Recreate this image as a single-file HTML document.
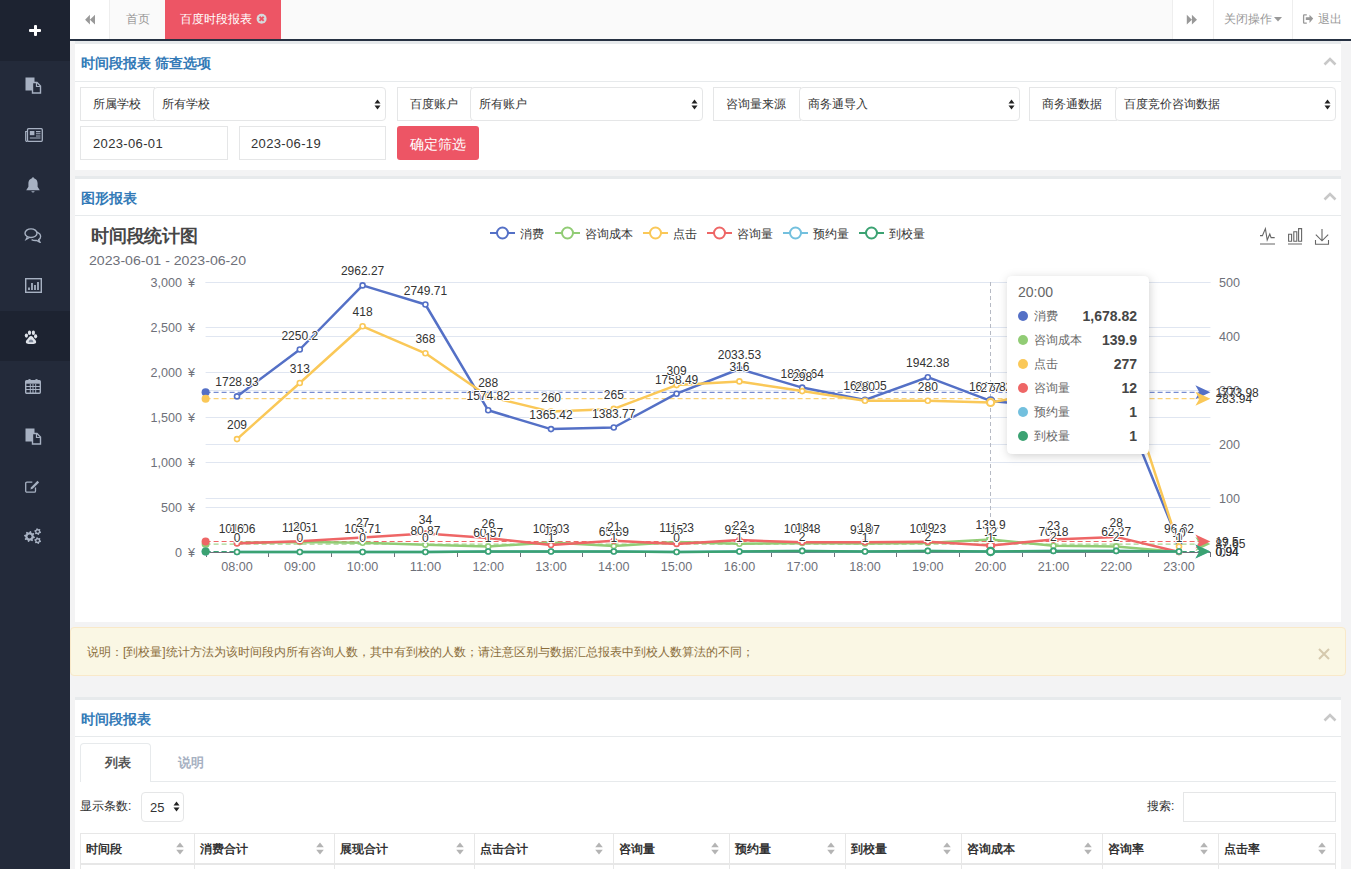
<!DOCTYPE html><html><head><meta charset="utf-8"><title>时间段报表</title><style>
*{margin:0;padding:0;box-sizing:border-box}
html,body{width:1351px;height:869px;overflow:hidden;background:#f3f3f4;font-family:"Liberation Sans",sans-serif;font-size:13px;color:#676a6c}
.a{position:absolute}
.t{position:absolute;white-space:nowrap;line-height:1}
i{display:inline-block;width:1em;text-align:center;font-style:normal}
</style></head><body>
<div class="a" style="left:0px;top:0px;width:70px;height:869px;background:#232a3a"></div>
<div class="a" style="left:0px;top:0px;width:70px;height:61px;background:#1d2331"></div>
<div class="a" style="left:0px;top:311px;width:70px;height:50px;background:#1d2331"></div>
<div class="a" style="left:29.3px;top:29px;width:11.4px;height:3px;background:#fff;border-radius:1px"></div>
<div class="a" style="left:33.5px;top:25px;width:3px;height:11px;background:#fff;border-radius:1px"></div>
<svg class="a" style="left:25px;top:77px;" width="17" height="17" viewBox="0 0 17 17"><rect x="0.5" y="0.5" width="9" height="13" fill="#a7b1c2"/><path d="M7.5 5.5h4.5l3.5 3.5v7h-8z" fill="#232a3a" stroke="#a7b1c2" stroke-width="1.4"/><path d="M11.5 5.5v4h4" fill="none" stroke="#a7b1c2" stroke-width="1.2"/></svg>
<svg class="a" style="left:25px;top:128px;" width="18" height="14" viewBox="0 0 18 14"><rect x="2.5" y="0.7" width="14.8" height="12.6" rx="1" fill="none" stroke="#a7b1c2" stroke-width="1.3"/><path d="M2.5 3.5H0.7v8.5a1.3 1.3 0 0 0 1.8 1.3" fill="none" stroke="#a7b1c2" stroke-width="1.2"/><rect x="4.8" y="3" width="4.6" height="4.2" fill="#a7b1c2"/><path d="M11 3.6h4.5M11 5.8h4.5M11 8h4.5M4.8 10h10.7" stroke="#a7b1c2" stroke-width="1.1"/></svg>
<svg class="a" style="left:25px;top:177px;" width="16" height="17" viewBox="0 0 16 17"><path d="M8 1.2c-3 0-4.6 2.4-4.6 5.2v3.4L1.2 13.2h13.6L12.6 9.8V6.4C12.6 3.6 11 1.2 8 1.2z" fill="#a7b1c2"/><circle cx="8" cy="1.2" r="1" fill="#a7b1c2"/><path d="M6.3 14.2a1.8 1.8 0 0 0 3.4 0z" fill="#a7b1c2"/></svg>
<svg class="a" style="left:24px;top:228px;" width="18" height="15" viewBox="0 0 18 15"><ellipse cx="7" cy="5.2" rx="6" ry="4.3" fill="none" stroke="#a7b1c2" stroke-width="1.4"/><path d="M3.5 8.5 2 11.5 6 9.3" fill="none" stroke="#a7b1c2" stroke-width="1.2"/><path d="M12.8 4.2c2.3.9 3.8 2.5 3.8 4.3 0 1.3-.7 2.4-1.9 3.2l1.3 2.6-3.4-1.8c-1.8.2-3.6-.1-5-.9" fill="none" stroke="#a7b1c2" stroke-width="1.4"/></svg>
<svg class="a" style="left:25px;top:278px;" width="17" height="15" viewBox="0 0 17 15"><rect x="0.7" y="0.7" width="15.6" height="13.6" fill="none" stroke="#a7b1c2" stroke-width="1.4"/><path d="M4 12V9.5M7 12V5M10 12V7M13 12V4" stroke="#a7b1c2" stroke-width="1.8"/></svg>
<svg class="a" style="left:24px;top:329px;" width="14" height="16" viewBox="0 0 14 16"><ellipse cx="2.4" cy="6.6" rx="1.6" ry="2.1" fill="#dfe3ea"/><ellipse cx="5.5" cy="3.7" rx="1.6" ry="2.2" fill="#dfe3ea"/><ellipse cx="9.4" cy="3.7" rx="1.6" ry="2.2" fill="#dfe3ea"/><ellipse cx="11.6" cy="7.3" rx="1.6" ry="2.1" fill="#dfe3ea"/><path d="M7 7C5.6 7 4.4 8.9 3.4 10.2 2.2 11.4 1.6 12.3 1.9 13.6 2.3 14.7 3.4 14.9 4.6 14.9h4.8c1.2 0 2.3-.2 2.7-1.3.3-1.3-.3-2.2-1.5-3.4C9.6 8.9 8.4 7 7 7z" fill="#dfe3ea"/><path d="M4.6 13.2c.2-1.4.9-2.8 2.4-2.8s2.2 1.4 2.4 2.8z" fill="#7d879a"/></svg>
<svg class="a" style="left:25px;top:378px;" width="16" height="16" viewBox="0 0 16 16"><rect x="0.7" y="2.7" width="14.6" height="12.6" rx="1" fill="none" stroke="#a7b1c2" stroke-width="1.4"/><rect x="0.7" y="2.7" width="14.6" height="3" fill="#a7b1c2"/><circle cx="4.5" cy="2.5" r="1.6" fill="#a7b1c2"/><circle cx="11.5" cy="2.5" r="1.6" fill="#a7b1c2"/><path d="M1 8.5h14M1 11.5h14M5.3 6v9M8 6v9M10.7 6v9" stroke="#a7b1c2" stroke-width="1"/></svg>
<svg class="a" style="left:25px;top:428px;" width="17" height="17" viewBox="0 0 17 17"><rect x="0.5" y="0.5" width="9" height="13" fill="#a7b1c2"/><path d="M7.5 5.5h4.5l3.5 3.5v7h-8z" fill="#232a3a" stroke="#a7b1c2" stroke-width="1.4"/><path d="M11.5 5.5v4h4" fill="none" stroke="#a7b1c2" stroke-width="1.2"/></svg>
<svg class="a" style="left:25px;top:480px;" width="15" height="13" viewBox="0 0 15 13"><path d="M10.5 7.5v3.5a1.2 1.2 0 0 1-1.2 1.2H1.9A1.2 1.2 0 0 1 .7 11V3.4a1.2 1.2 0 0 1 1.2-1.2h5.4" fill="none" stroke="#a7b1c2" stroke-width="1.3"/><path d="M12.5 .8l1.6 1.6-6.4 6.4-2.3.7.7-2.3z" fill="#a7b1c2"/></svg>
<svg class="a" style="left:24px;top:528px;" width="18" height="16" viewBox="0 0 18 16"><polygon points="10.97,9.04 10.76,10.10 9.14,10.44 8.69,11.12 8.99,12.75 8.09,13.35 6.70,12.45 5.90,12.61 4.96,13.97 3.90,13.76 3.56,12.14 2.88,11.69 1.25,11.99 0.65,11.09 1.55,9.70 1.39,8.90 0.03,7.96 0.24,6.90 1.86,6.56 2.31,5.88 2.01,4.25 2.91,3.65 4.30,4.55 5.10,4.39 6.04,3.03 7.10,3.24 7.44,4.86 8.12,5.31 9.75,5.01 10.35,5.91 9.45,7.30 9.61,8.10" fill="#a7b1c2"/><circle cx="5.5" cy="8.5" r="2.0" fill="#232a3a"/><polygon points="17.07,4.04 16.84,4.90 15.72,5.15 15.25,5.62 15.00,6.74 14.14,6.97 13.37,6.13 12.72,5.96 11.63,6.30 11.00,5.67 11.34,4.58 11.17,3.93 10.33,3.16 10.56,2.30 11.68,2.05 12.15,1.58 12.40,0.46 13.26,0.23 14.03,1.07 14.68,1.24 15.77,0.90 16.40,1.53 16.06,2.62 16.23,3.27" fill="#a7b1c2"/><circle cx="13.7" cy="3.6" r="1.2" fill="#232a3a"/><polygon points="17.07,13.04 16.84,13.90 15.72,14.15 15.25,14.62 15.00,15.74 14.14,15.97 13.37,15.13 12.72,14.96 11.63,15.30 11.00,14.67 11.34,13.58 11.17,12.93 10.33,12.16 10.56,11.30 11.68,11.05 12.15,10.58 12.40,9.46 13.26,9.23 14.03,10.07 14.68,10.24 15.77,9.90 16.40,10.53 16.06,11.62 16.23,12.27" fill="#a7b1c2"/><circle cx="13.7" cy="12.6" r="1.2" fill="#232a3a"/></svg>
<div class="a" style="left:70px;top:0px;width:1281px;height:39px;background:#fafafa"></div>
<div class="a" style="left:70px;top:39px;width:1281px;height:2px;background:#263142"></div>
<div class="a" style="left:70px;top:0px;width:40px;height:39px;background:#fff;border-right:1px solid #eee"></div>
<svg class="a" style="left:84px;top:14px;" width="12" height="11" viewBox="0 0 12 11"><path d="M5.9 0.8v9.7L1.1 5.65z M11 0.8v9.7L5.9 5.65z" fill="#999"/></svg>
<div class="t" style="left:110px;width:55px;text-align:center;top:12.6px;font-size:12px;color:#999;font-weight:normal;"><i>首</i><i>页</i></div>
<div class="a" style="left:165px;top:0px;width:116px;height:39px;background:#ed5565"></div>
<div class="t" style="left:180px;top:12.6px;font-size:12px;color:#fff;font-weight:normal;"><i>百</i><i>度</i><i>时</i><i>段</i><i>报</i><i>表</i></div>
<svg class="a" style="left:256px;top:13px;" width="12" height="12" viewBox="0 0 12 12"><circle cx="5.6" cy="5.8" r="5" fill="#d5dadc"/><path d="M3.5 3.7l4.2 4.2M7.7 3.7l-4.2 4.2" stroke="#ed5565" stroke-width="2"/></svg>
<div class="a" style="left:1172px;top:0px;width:41px;height:39px;background:#fff;border-left:1px solid #eee"></div>
<svg class="a" style="left:1186px;top:14px;" width="12" height="11" viewBox="0 0 12 11"><path d="M0.8 0.8v9.7L5.9 5.65z M5.9 0.8v9.7L11 5.65z" fill="#999"/></svg>
<div class="a" style="left:1213px;top:0px;width:79px;height:39px;background:#fff;border-left:1px solid #eee"></div>
<div class="t" style="left:1224px;top:12.6px;font-size:12px;color:#999;font-weight:normal;"><i>关</i><i>闭</i><i>操</i><i>作</i></div>
<svg class="a" style="left:1274px;top:17px;" width="8" height="5" viewBox="0 0 8 5"><path d="M0 0h8L4 4.5z" fill="#999"/></svg>
<div class="a" style="left:1292px;top:0px;width:59px;height:39px;background:#fff;border-left:1px solid #eee"></div>
<svg class="a" style="left:1302px;top:13px;" width="13" height="12" viewBox="0 0 13 12"><path d="M4.8 1.8H2.2Q1.6 1.8 1.6 2.4v7.2q0 .6.6.6h2.6" fill="none" stroke="#999" stroke-width="1.3"/><path d="M3.8 4.3h3.7V1.8L11.2 5.6 7.5 9.9V7.1H3.8z" fill="#999"/></svg>
<div class="t" style="left:1318px;top:12.6px;font-size:12px;color:#999;font-weight:normal;"><i>退</i><i>出</i></div>
<div class="a" style="left:75px;top:41px;width:1266px;height:129px;background:#fff;border-top:3px solid #e7eaec"></div>
<div class="a" style="left:75px;top:81px;width:1266px;height:1px;background:#e7eaec"></div>
<div class="t" style="left:81px;top:56.0px;font-size:14px;color:#337ab7;font-weight:bold;"><i>时</i><i>间</i><i>段</i><i>报</i><i>表</i> <i>筛</i><i>查</i><i>选</i><i>项</i></div>
<svg class="a" style="left:1323px;top:57.0px;" width="14" height="9" viewBox="0 0 14 9"><path d="M1.5 7.5 7 2l5.5 5.5" fill="none" stroke="#c8c8c8" stroke-width="2.6"/></svg>
<div class="a" style="left:75px;top:176px;width:1266px;height:446px;background:#fff;border-top:3px solid #e7eaec"></div>
<div class="a" style="left:75px;top:215px;width:1266px;height:1px;background:#e7eaec"></div>
<div class="t" style="left:81px;top:190.5px;font-size:14px;color:#337ab7;font-weight:bold;"><i>图</i><i>形</i><i>报</i><i>表</i></div>
<svg class="a" style="left:1323px;top:191.5px;" width="14" height="9" viewBox="0 0 14 9"><path d="M1.5 7.5 7 2l5.5 5.5" fill="none" stroke="#c8c8c8" stroke-width="2.6"/></svg>
<div class="a" style="left:80px;top:87px;width:75px;height:34px;background:#fff;border:1px solid #e5e6e7"></div>
<div class="t" style="left:80px;width:73px;text-align:center;top:98.0px;font-size:12px;color:#333;font-weight:normal;"><i>所</i><i>属</i><i>学</i><i>校</i></div>
<div class="a" style="left:153px;top:87px;width:233px;height:34px;background:#fff;border:1px solid #e5e6e7;border-radius:4px"></div>
<div class="t" style="left:162px;top:98.0px;font-size:12px;color:#333;font-weight:normal;"><i>所</i><i>有</i><i>学</i><i>校</i></div>
<svg class="a" style="left:374px;top:99px;" width="7" height="11" viewBox="0 0 7 11"><path d="M3.5 0.5 6.5 4.5h-6zM3.5 10.5 6.5 6.5h-6z" fill="#222"/></svg>
<div class="a" style="left:397px;top:87px;width:75px;height:34px;background:#fff;border:1px solid #e5e6e7"></div>
<div class="t" style="left:397px;width:73px;text-align:center;top:98.0px;font-size:12px;color:#333;font-weight:normal;"><i>百</i><i>度</i><i>账</i><i>户</i></div>
<div class="a" style="left:470px;top:87px;width:233px;height:34px;background:#fff;border:1px solid #e5e6e7;border-radius:4px"></div>
<div class="t" style="left:479px;top:98.0px;font-size:12px;color:#333;font-weight:normal;"><i>所</i><i>有</i><i>账</i><i>户</i></div>
<svg class="a" style="left:691px;top:99px;" width="7" height="11" viewBox="0 0 7 11"><path d="M3.5 0.5 6.5 4.5h-6zM3.5 10.5 6.5 6.5h-6z" fill="#222"/></svg>
<div class="a" style="left:713px;top:87px;width:88px;height:34px;background:#fff;border:1px solid #e5e6e7"></div>
<div class="t" style="left:713px;width:86px;text-align:center;top:98.0px;font-size:12px;color:#333;font-weight:normal;"><i>咨</i><i>询</i><i>量</i><i>来</i><i>源</i></div>
<div class="a" style="left:799px;top:87px;width:221px;height:34px;background:#fff;border:1px solid #e5e6e7;border-radius:4px"></div>
<div class="t" style="left:808px;top:98.0px;font-size:12px;color:#333;font-weight:normal;"><i>商</i><i>务</i><i>通</i><i>导</i><i>入</i></div>
<svg class="a" style="left:1008px;top:99px;" width="7" height="11" viewBox="0 0 7 11"><path d="M3.5 0.5 6.5 4.5h-6zM3.5 10.5 6.5 6.5h-6z" fill="#222"/></svg>
<div class="a" style="left:1029px;top:87px;width:88px;height:34px;background:#fff;border:1px solid #e5e6e7"></div>
<div class="t" style="left:1029px;width:86px;text-align:center;top:98.0px;font-size:12px;color:#333;font-weight:normal;"><i>商</i><i>务</i><i>通</i><i>数</i><i>据</i></div>
<div class="a" style="left:1115px;top:87px;width:221px;height:34px;background:#fff;border:1px solid #e5e6e7;border-radius:4px"></div>
<div class="t" style="left:1124px;top:98.0px;font-size:12px;color:#333;font-weight:normal;"><i>百</i><i>度</i><i>竞</i><i>价</i><i>咨</i><i>询</i><i>数</i><i>据</i></div>
<svg class="a" style="left:1324px;top:99px;" width="7" height="11" viewBox="0 0 7 11"><path d="M3.5 0.5 6.5 4.5h-6zM3.5 10.5 6.5 6.5h-6z" fill="#222"/></svg>
<div class="a" style="left:80px;top:126px;width:147.5px;height:34px;background:#fff;border:1px solid #e5e6e7"></div>
<div class="t" style="left:93px;top:137.0px;font-size:13px;color:#333;font-weight:normal;letter-spacing:0.35px">2023-06-01</div>
<div class="a" style="left:239px;top:126px;width:147px;height:34px;background:#fff;border:1px solid #e5e6e7"></div>
<div class="t" style="left:251px;top:137.0px;font-size:13px;color:#333;font-weight:normal;letter-spacing:0.35px">2023-06-19</div>
<div class="a" style="left:397px;top:126px;width:82px;height:34px;background:#ed5565;border-radius:3px"></div>
<div class="t" style="left:397px;width:82px;text-align:center;top:136.5px;font-size:14px;color:#fff;font-weight:normal;"><i>确</i><i>定</i><i>筛</i><i>选</i></div>
<svg class="a" style="left:0;top:0" width="1351" height="869" viewBox="0 0 1351 869" font-family="Liberation Sans, sans-serif">
<text x="91" y="241.8" font-size="18" font-weight="bold" fill="#464646" textLength="107" lengthAdjust="spacing">时间段统计图</text>
<text x="89" y="265" font-size="12" fill="#6e7079" textLength="157" lengthAdjust="spacingAndGlyphs">2023-06-01 - 2023-06-20</text>
<line x1="205.6" y1="507.5" x2="1210.4" y2="507.5" stroke="#e0e6f1" stroke-width="1"/>
<line x1="205.6" y1="462.5" x2="1210.4" y2="462.5" stroke="#e0e6f1" stroke-width="1"/>
<line x1="205.6" y1="417.5" x2="1210.4" y2="417.5" stroke="#e0e6f1" stroke-width="1"/>
<line x1="205.6" y1="372.5" x2="1210.4" y2="372.5" stroke="#e0e6f1" stroke-width="1"/>
<line x1="205.6" y1="327.5" x2="1210.4" y2="327.5" stroke="#e0e6f1" stroke-width="1"/>
<line x1="205.6" y1="282.5" x2="1210.4" y2="282.5" stroke="#e0e6f1" stroke-width="1"/>
<line x1="205.6" y1="498.5" x2="1210.4" y2="498.5" stroke="#e0e6f1" stroke-width="1"/>
<line x1="205.6" y1="444.5" x2="1210.4" y2="444.5" stroke="#e0e6f1" stroke-width="1"/>
<line x1="205.6" y1="390.5" x2="1210.4" y2="390.5" stroke="#e0e6f1" stroke-width="1"/>
<line x1="205.6" y1="336.5" x2="1210.4" y2="336.5" stroke="#e0e6f1" stroke-width="1"/>
<line x1="205.6" y1="282.5" x2="1210.4" y2="282.5" stroke="#e0e6f1" stroke-width="1"/>
<text x="182" y="557.2" font-size="12" fill="#6e7079" text-anchor="end" textLength="7.0" lengthAdjust="spacingAndGlyphs">0</text>
<text x="188" y="557.2" font-size="12" fill="#6e7079" textLength="7" lengthAdjust="spacingAndGlyphs">¥</text>
<text x="182" y="512.2" font-size="12" fill="#6e7079" text-anchor="end" textLength="21.0" lengthAdjust="spacingAndGlyphs">500</text>
<text x="188" y="512.2" font-size="12" fill="#6e7079" textLength="7" lengthAdjust="spacingAndGlyphs">¥</text>
<text x="182" y="467.2" font-size="12" fill="#6e7079" text-anchor="end" textLength="31.5" lengthAdjust="spacingAndGlyphs">1,000</text>
<text x="188" y="467.2" font-size="12" fill="#6e7079" textLength="7" lengthAdjust="spacingAndGlyphs">¥</text>
<text x="182" y="422.2" font-size="12" fill="#6e7079" text-anchor="end" textLength="31.5" lengthAdjust="spacingAndGlyphs">1,500</text>
<text x="188" y="422.2" font-size="12" fill="#6e7079" textLength="7" lengthAdjust="spacingAndGlyphs">¥</text>
<text x="182" y="377.2" font-size="12" fill="#6e7079" text-anchor="end" textLength="31.5" lengthAdjust="spacingAndGlyphs">2,000</text>
<text x="188" y="377.2" font-size="12" fill="#6e7079" textLength="7" lengthAdjust="spacingAndGlyphs">¥</text>
<text x="182" y="332.2" font-size="12" fill="#6e7079" text-anchor="end" textLength="31.5" lengthAdjust="spacingAndGlyphs">2,500</text>
<text x="188" y="332.2" font-size="12" fill="#6e7079" textLength="7" lengthAdjust="spacingAndGlyphs">¥</text>
<text x="182" y="287.2" font-size="12" fill="#6e7079" text-anchor="end" textLength="31.5" lengthAdjust="spacingAndGlyphs">3,000</text>
<text x="188" y="287.2" font-size="12" fill="#6e7079" textLength="7" lengthAdjust="spacingAndGlyphs">¥</text>
<text x="1219" y="557.2" font-size="12" fill="#6e7079" textLength="7.0" lengthAdjust="spacingAndGlyphs">0</text>
<text x="1219" y="503.2" font-size="12" fill="#6e7079" textLength="21.0" lengthAdjust="spacingAndGlyphs">100</text>
<text x="1219" y="449.2" font-size="12" fill="#6e7079" textLength="21.0" lengthAdjust="spacingAndGlyphs">200</text>
<text x="1219" y="395.2" font-size="12" fill="#6e7079" textLength="21.0" lengthAdjust="spacingAndGlyphs">300</text>
<text x="1219" y="341.2" font-size="12" fill="#6e7079" textLength="21.0" lengthAdjust="spacingAndGlyphs">400</text>
<text x="1219" y="287.2" font-size="12" fill="#6e7079" textLength="21.0" lengthAdjust="spacingAndGlyphs">500</text>
<line x1="205.6" y1="552.5" x2="1210.4" y2="552.5" stroke="#6e7079" stroke-width="1"/>
<line x1="206.5" y1="552" x2="206.5" y2="557" stroke="#6e7079" stroke-width="1"/>
<line x1="268.5" y1="552" x2="268.5" y2="557" stroke="#6e7079" stroke-width="1"/>
<line x1="331.5" y1="552" x2="331.5" y2="557" stroke="#6e7079" stroke-width="1"/>
<line x1="394.5" y1="552" x2="394.5" y2="557" stroke="#6e7079" stroke-width="1"/>
<line x1="457.5" y1="552" x2="457.5" y2="557" stroke="#6e7079" stroke-width="1"/>
<line x1="520.5" y1="552" x2="520.5" y2="557" stroke="#6e7079" stroke-width="1"/>
<line x1="582.5" y1="552" x2="582.5" y2="557" stroke="#6e7079" stroke-width="1"/>
<line x1="645.5" y1="552" x2="645.5" y2="557" stroke="#6e7079" stroke-width="1"/>
<line x1="708.5" y1="552" x2="708.5" y2="557" stroke="#6e7079" stroke-width="1"/>
<line x1="771.5" y1="552" x2="771.5" y2="557" stroke="#6e7079" stroke-width="1"/>
<line x1="834.5" y1="552" x2="834.5" y2="557" stroke="#6e7079" stroke-width="1"/>
<line x1="896.5" y1="552" x2="896.5" y2="557" stroke="#6e7079" stroke-width="1"/>
<line x1="959.5" y1="552" x2="959.5" y2="557" stroke="#6e7079" stroke-width="1"/>
<line x1="1022.5" y1="552" x2="1022.5" y2="557" stroke="#6e7079" stroke-width="1"/>
<line x1="1085.5" y1="552" x2="1085.5" y2="557" stroke="#6e7079" stroke-width="1"/>
<line x1="1148.5" y1="552" x2="1148.5" y2="557" stroke="#6e7079" stroke-width="1"/>
<line x1="1210.5" y1="552" x2="1210.5" y2="557" stroke="#6e7079" stroke-width="1"/>
<text x="237.0" y="570.5" font-size="12" fill="#6e7079" text-anchor="middle" textLength="31.5" lengthAdjust="spacingAndGlyphs">08:00</text>
<text x="299.8" y="570.5" font-size="12" fill="#6e7079" text-anchor="middle" textLength="31.5" lengthAdjust="spacingAndGlyphs">09:00</text>
<text x="362.6" y="570.5" font-size="12" fill="#6e7079" text-anchor="middle" textLength="31.5" lengthAdjust="spacingAndGlyphs">10:00</text>
<text x="425.4" y="570.5" font-size="12" fill="#6e7079" text-anchor="middle" textLength="31.5" lengthAdjust="spacingAndGlyphs">11:00</text>
<text x="488.2" y="570.5" font-size="12" fill="#6e7079" text-anchor="middle" textLength="31.5" lengthAdjust="spacingAndGlyphs">12:00</text>
<text x="551.0" y="570.5" font-size="12" fill="#6e7079" text-anchor="middle" textLength="31.5" lengthAdjust="spacingAndGlyphs">13:00</text>
<text x="613.8" y="570.5" font-size="12" fill="#6e7079" text-anchor="middle" textLength="31.5" lengthAdjust="spacingAndGlyphs">14:00</text>
<text x="676.6" y="570.5" font-size="12" fill="#6e7079" text-anchor="middle" textLength="31.5" lengthAdjust="spacingAndGlyphs">15:00</text>
<text x="739.4" y="570.5" font-size="12" fill="#6e7079" text-anchor="middle" textLength="31.5" lengthAdjust="spacingAndGlyphs">16:00</text>
<text x="802.2" y="570.5" font-size="12" fill="#6e7079" text-anchor="middle" textLength="31.5" lengthAdjust="spacingAndGlyphs">17:00</text>
<text x="865.0" y="570.5" font-size="12" fill="#6e7079" text-anchor="middle" textLength="31.5" lengthAdjust="spacingAndGlyphs">18:00</text>
<text x="927.8" y="570.5" font-size="12" fill="#6e7079" text-anchor="middle" textLength="31.5" lengthAdjust="spacingAndGlyphs">19:00</text>
<text x="990.6" y="570.5" font-size="12" fill="#6e7079" text-anchor="middle" textLength="31.5" lengthAdjust="spacingAndGlyphs">20:00</text>
<text x="1053.4" y="570.5" font-size="12" fill="#6e7079" text-anchor="middle" textLength="31.5" lengthAdjust="spacingAndGlyphs">21:00</text>
<text x="1116.2" y="570.5" font-size="12" fill="#6e7079" text-anchor="middle" textLength="31.5" lengthAdjust="spacingAndGlyphs">22:00</text>
<text x="1179.0" y="570.5" font-size="12" fill="#6e7079" text-anchor="middle" textLength="31.5" lengthAdjust="spacingAndGlyphs">23:00</text>
<line x1="990.5" y1="282" x2="990.5" y2="552" stroke="#b6bac4" stroke-width="1" stroke-dasharray="4 3"/>
<line x1="205.6" y1="392.3" x2="1202.4" y2="392.3" stroke="#5470c6" stroke-width="1" stroke-dasharray="5 3"/>
<circle cx="205.6" cy="392.3" r="4" fill="#5470c6"/>
<path d="M1210.4 392.3 L1195.4 385.3 L1199.4 392.3 L1195.4 399.3 Z" fill="#5470c6"/>
<text x="1215.4" y="396.6" font-size="12" fill="#333">1773.98</text>
<line x1="205.6" y1="544.1" x2="1202.4" y2="544.1" stroke="#91cc75" stroke-width="1" stroke-dasharray="5 3"/>
<circle cx="205.6" cy="544.1" r="4" fill="#91cc75"/>
<path d="M1210.4 544.1 L1195.4 537.1 L1199.4 544.1 L1195.4 551.1 Z" fill="#91cc75"/>
<text x="1215.4" y="548.4" font-size="12" fill="#333">87.65</text>
<line x1="205.6" y1="398.7" x2="1202.4" y2="398.7" stroke="#fac858" stroke-width="1" stroke-dasharray="5 3"/>
<circle cx="205.6" cy="398.7" r="4" fill="#fac858"/>
<path d="M1210.4 398.7 L1195.4 391.7 L1199.4 398.7 L1195.4 405.7 Z" fill="#fac858"/>
<text x="1215.4" y="403.0" font-size="12" fill="#333">283.94</text>
<line x1="205.6" y1="541.5" x2="1202.4" y2="541.5" stroke="#ee6666" stroke-width="1" stroke-dasharray="5 3"/>
<circle cx="205.6" cy="541.5" r="4" fill="#ee6666"/>
<path d="M1210.4 541.5 L1195.4 534.5 L1199.4 541.5 L1195.4 548.5 Z" fill="#ee6666"/>
<text x="1215.4" y="545.8" font-size="12" fill="#333">19.5</text>
<line x1="205.6" y1="551.5" x2="1202.4" y2="551.5" stroke="#73c0de" stroke-width="1" stroke-dasharray="5 3"/>
<circle cx="205.6" cy="551.5" r="4" fill="#73c0de"/>
<path d="M1210.4 551.5 L1195.4 544.5 L1199.4 551.5 L1195.4 558.5 Z" fill="#73c0de"/>
<text x="1215.4" y="555.8" font-size="12" fill="#333">0.94</text>
<line x1="205.6" y1="551.5" x2="1202.4" y2="551.5" stroke="#3ba272" stroke-width="1" stroke-dasharray="5 3"/>
<circle cx="205.6" cy="551.5" r="4" fill="#3ba272"/>
<path d="M1210.4 551.5 L1195.4 544.5 L1199.4 551.5 L1195.4 558.5 Z" fill="#3ba272"/>
<text x="1215.4" y="555.8" font-size="12" fill="#333">0.94</text>
<polyline points="237.0,396.4 299.8,349.5 362.6,285.4 425.4,304.5 488.2,410.3 551.0,429.1 613.8,427.5 676.6,393.7 739.4,369.0 802.2,387.6 865.0,399.9 927.8,377.2 990.6,400.9 1053.4,406.6 1116.2,388.5 1179.0,543.3" fill="none" stroke="#5470c6" stroke-width="2.5" stroke-linejoin="round"/>
<circle cx="237.0" cy="396.4" r="2.5" fill="#fff" stroke="#5470c6" stroke-width="1.6"/>
<circle cx="299.8" cy="349.5" r="2.5" fill="#fff" stroke="#5470c6" stroke-width="1.6"/>
<circle cx="362.6" cy="285.4" r="2.5" fill="#fff" stroke="#5470c6" stroke-width="1.6"/>
<circle cx="425.4" cy="304.5" r="2.5" fill="#fff" stroke="#5470c6" stroke-width="1.6"/>
<circle cx="488.2" cy="410.3" r="2.5" fill="#fff" stroke="#5470c6" stroke-width="1.6"/>
<circle cx="551.0" cy="429.1" r="2.5" fill="#fff" stroke="#5470c6" stroke-width="1.6"/>
<circle cx="613.8" cy="427.5" r="2.5" fill="#fff" stroke="#5470c6" stroke-width="1.6"/>
<circle cx="676.6" cy="393.7" r="2.5" fill="#fff" stroke="#5470c6" stroke-width="1.6"/>
<circle cx="739.4" cy="369.0" r="2.5" fill="#fff" stroke="#5470c6" stroke-width="1.6"/>
<circle cx="802.2" cy="387.6" r="2.5" fill="#fff" stroke="#5470c6" stroke-width="1.6"/>
<circle cx="865.0" cy="399.9" r="2.5" fill="#fff" stroke="#5470c6" stroke-width="1.6"/>
<circle cx="927.8" cy="377.2" r="2.5" fill="#fff" stroke="#5470c6" stroke-width="1.6"/>
<circle cx="990.6" cy="400.9" r="3.6" fill="#fff" stroke="#5470c6" stroke-width="2.2"/>
<circle cx="1053.4" cy="406.6" r="2.5" fill="#fff" stroke="#5470c6" stroke-width="1.6"/>
<circle cx="1116.2" cy="388.5" r="2.5" fill="#fff" stroke="#5470c6" stroke-width="1.6"/>
<circle cx="1179.0" cy="543.3" r="2.5" fill="#fff" stroke="#5470c6" stroke-width="1.6"/>
<polyline points="237.0,542.9 299.8,541.9 362.6,542.7 425.4,544.7 488.2,546.5 551.0,542.5 613.8,546.1 676.6,542.0 739.4,543.7 802.2,542.9 865.0,543.5 927.8,542.9 990.6,539.4 1053.4,545.7 1116.2,546.4 1179.0,552.0" fill="none" stroke="#91cc75" stroke-width="2.5" stroke-linejoin="round"/>
<circle cx="237.0" cy="542.9" r="2.5" fill="#fff" stroke="#91cc75" stroke-width="1.6"/>
<circle cx="299.8" cy="541.9" r="2.5" fill="#fff" stroke="#91cc75" stroke-width="1.6"/>
<circle cx="362.6" cy="542.7" r="2.5" fill="#fff" stroke="#91cc75" stroke-width="1.6"/>
<circle cx="425.4" cy="544.7" r="2.5" fill="#fff" stroke="#91cc75" stroke-width="1.6"/>
<circle cx="488.2" cy="546.5" r="2.5" fill="#fff" stroke="#91cc75" stroke-width="1.6"/>
<circle cx="551.0" cy="542.5" r="2.5" fill="#fff" stroke="#91cc75" stroke-width="1.6"/>
<circle cx="613.8" cy="546.1" r="2.5" fill="#fff" stroke="#91cc75" stroke-width="1.6"/>
<circle cx="676.6" cy="542.0" r="2.5" fill="#fff" stroke="#91cc75" stroke-width="1.6"/>
<circle cx="739.4" cy="543.7" r="2.5" fill="#fff" stroke="#91cc75" stroke-width="1.6"/>
<circle cx="802.2" cy="542.9" r="2.5" fill="#fff" stroke="#91cc75" stroke-width="1.6"/>
<circle cx="865.0" cy="543.5" r="2.5" fill="#fff" stroke="#91cc75" stroke-width="1.6"/>
<circle cx="927.8" cy="542.9" r="2.5" fill="#fff" stroke="#91cc75" stroke-width="1.6"/>
<circle cx="990.6" cy="539.4" r="3.6" fill="#fff" stroke="#91cc75" stroke-width="2.2"/>
<circle cx="1053.4" cy="545.7" r="2.5" fill="#fff" stroke="#91cc75" stroke-width="1.6"/>
<circle cx="1116.2" cy="546.4" r="2.5" fill="#fff" stroke="#91cc75" stroke-width="1.6"/>
<circle cx="1179.0" cy="552.0" r="2.5" fill="#fff" stroke="#91cc75" stroke-width="1.6"/>
<polyline points="237.0,439.1 299.8,383.0 362.6,326.3 425.4,353.3 488.2,396.5 551.0,411.6 613.8,408.9 676.6,385.1 739.4,381.4 802.2,391.1 865.0,400.8 927.8,400.8 990.6,402.4 1053.4,391.1 1116.2,354.4 1179.0,546.6" fill="none" stroke="#fac858" stroke-width="2.5" stroke-linejoin="round"/>
<circle cx="237.0" cy="439.1" r="2.5" fill="#fff" stroke="#fac858" stroke-width="1.6"/>
<circle cx="299.8" cy="383.0" r="2.5" fill="#fff" stroke="#fac858" stroke-width="1.6"/>
<circle cx="362.6" cy="326.3" r="2.5" fill="#fff" stroke="#fac858" stroke-width="1.6"/>
<circle cx="425.4" cy="353.3" r="2.5" fill="#fff" stroke="#fac858" stroke-width="1.6"/>
<circle cx="488.2" cy="396.5" r="2.5" fill="#fff" stroke="#fac858" stroke-width="1.6"/>
<circle cx="551.0" cy="411.6" r="2.5" fill="#fff" stroke="#fac858" stroke-width="1.6"/>
<circle cx="613.8" cy="408.9" r="2.5" fill="#fff" stroke="#fac858" stroke-width="1.6"/>
<circle cx="676.6" cy="385.1" r="2.5" fill="#fff" stroke="#fac858" stroke-width="1.6"/>
<circle cx="739.4" cy="381.4" r="2.5" fill="#fff" stroke="#fac858" stroke-width="1.6"/>
<circle cx="802.2" cy="391.1" r="2.5" fill="#fff" stroke="#fac858" stroke-width="1.6"/>
<circle cx="865.0" cy="400.8" r="2.5" fill="#fff" stroke="#fac858" stroke-width="1.6"/>
<circle cx="927.8" cy="400.8" r="2.5" fill="#fff" stroke="#fac858" stroke-width="1.6"/>
<circle cx="990.6" cy="402.4" r="3.6" fill="#fff" stroke="#fac858" stroke-width="2.2"/>
<circle cx="1053.4" cy="391.1" r="2.5" fill="#fff" stroke="#fac858" stroke-width="1.6"/>
<circle cx="1116.2" cy="354.4" r="2.5" fill="#fff" stroke="#fac858" stroke-width="1.6"/>
<circle cx="1179.0" cy="546.6" r="2.5" fill="#fff" stroke="#fac858" stroke-width="1.6"/>
<polyline points="237.0,543.4 299.8,541.2 362.6,537.4 425.4,533.6 488.2,538.0 551.0,545.0 613.8,540.7 676.6,543.9 739.4,540.1 802.2,542.3 865.0,542.3 927.8,541.7 990.6,545.5 1053.4,539.6 1116.2,536.9 1179.0,552.0" fill="none" stroke="#ee6666" stroke-width="2.5" stroke-linejoin="round"/>
<circle cx="237.0" cy="543.4" r="2.5" fill="#fff" stroke="#ee6666" stroke-width="1.6"/>
<circle cx="299.8" cy="541.2" r="2.5" fill="#fff" stroke="#ee6666" stroke-width="1.6"/>
<circle cx="362.6" cy="537.4" r="2.5" fill="#fff" stroke="#ee6666" stroke-width="1.6"/>
<circle cx="425.4" cy="533.6" r="2.5" fill="#fff" stroke="#ee6666" stroke-width="1.6"/>
<circle cx="488.2" cy="538.0" r="2.5" fill="#fff" stroke="#ee6666" stroke-width="1.6"/>
<circle cx="551.0" cy="545.0" r="2.5" fill="#fff" stroke="#ee6666" stroke-width="1.6"/>
<circle cx="613.8" cy="540.7" r="2.5" fill="#fff" stroke="#ee6666" stroke-width="1.6"/>
<circle cx="676.6" cy="543.9" r="2.5" fill="#fff" stroke="#ee6666" stroke-width="1.6"/>
<circle cx="739.4" cy="540.1" r="2.5" fill="#fff" stroke="#ee6666" stroke-width="1.6"/>
<circle cx="802.2" cy="542.3" r="2.5" fill="#fff" stroke="#ee6666" stroke-width="1.6"/>
<circle cx="865.0" cy="542.3" r="2.5" fill="#fff" stroke="#ee6666" stroke-width="1.6"/>
<circle cx="927.8" cy="541.7" r="2.5" fill="#fff" stroke="#ee6666" stroke-width="1.6"/>
<circle cx="990.6" cy="545.5" r="3.6" fill="#fff" stroke="#ee6666" stroke-width="2.2"/>
<circle cx="1053.4" cy="539.6" r="2.5" fill="#fff" stroke="#ee6666" stroke-width="1.6"/>
<circle cx="1116.2" cy="536.9" r="2.5" fill="#fff" stroke="#ee6666" stroke-width="1.6"/>
<circle cx="1179.0" cy="552.0" r="2.5" fill="#fff" stroke="#ee6666" stroke-width="1.6"/>
<polyline points="237.0,552.0 299.8,552.0 362.6,552.0 425.4,552.0 488.2,551.5 551.0,551.5 613.8,551.5 676.6,552.0 739.4,551.5 802.2,550.9 865.0,551.5 927.8,550.9 990.6,551.5 1053.4,550.9 1116.2,550.9 1179.0,551.5" fill="none" stroke="#73c0de" stroke-width="2.5" stroke-linejoin="round"/>
<circle cx="237.0" cy="552.0" r="2.5" fill="#fff" stroke="#73c0de" stroke-width="1.6"/>
<circle cx="299.8" cy="552.0" r="2.5" fill="#fff" stroke="#73c0de" stroke-width="1.6"/>
<circle cx="362.6" cy="552.0" r="2.5" fill="#fff" stroke="#73c0de" stroke-width="1.6"/>
<circle cx="425.4" cy="552.0" r="2.5" fill="#fff" stroke="#73c0de" stroke-width="1.6"/>
<circle cx="488.2" cy="551.5" r="2.5" fill="#fff" stroke="#73c0de" stroke-width="1.6"/>
<circle cx="551.0" cy="551.5" r="2.5" fill="#fff" stroke="#73c0de" stroke-width="1.6"/>
<circle cx="613.8" cy="551.5" r="2.5" fill="#fff" stroke="#73c0de" stroke-width="1.6"/>
<circle cx="676.6" cy="552.0" r="2.5" fill="#fff" stroke="#73c0de" stroke-width="1.6"/>
<circle cx="739.4" cy="551.5" r="2.5" fill="#fff" stroke="#73c0de" stroke-width="1.6"/>
<circle cx="802.2" cy="550.9" r="2.5" fill="#fff" stroke="#73c0de" stroke-width="1.6"/>
<circle cx="865.0" cy="551.5" r="2.5" fill="#fff" stroke="#73c0de" stroke-width="1.6"/>
<circle cx="927.8" cy="550.9" r="2.5" fill="#fff" stroke="#73c0de" stroke-width="1.6"/>
<circle cx="990.6" cy="551.5" r="3.6" fill="#fff" stroke="#73c0de" stroke-width="2.2"/>
<circle cx="1053.4" cy="550.9" r="2.5" fill="#fff" stroke="#73c0de" stroke-width="1.6"/>
<circle cx="1116.2" cy="550.9" r="2.5" fill="#fff" stroke="#73c0de" stroke-width="1.6"/>
<circle cx="1179.0" cy="551.5" r="2.5" fill="#fff" stroke="#73c0de" stroke-width="1.6"/>
<polyline points="237.0,552.0 299.8,552.0 362.6,552.0 425.4,552.0 488.2,551.5 551.0,551.5 613.8,551.5 676.6,552.0 739.4,551.5 802.2,550.9 865.0,551.5 927.8,550.9 990.6,551.5 1053.4,550.9 1116.2,550.9 1179.0,551.5" fill="none" stroke="#3ba272" stroke-width="2.5" stroke-linejoin="round"/>
<circle cx="237.0" cy="552.0" r="2.5" fill="#fff" stroke="#3ba272" stroke-width="1.6"/>
<circle cx="299.8" cy="552.0" r="2.5" fill="#fff" stroke="#3ba272" stroke-width="1.6"/>
<circle cx="362.6" cy="552.0" r="2.5" fill="#fff" stroke="#3ba272" stroke-width="1.6"/>
<circle cx="425.4" cy="552.0" r="2.5" fill="#fff" stroke="#3ba272" stroke-width="1.6"/>
<circle cx="488.2" cy="551.5" r="2.5" fill="#fff" stroke="#3ba272" stroke-width="1.6"/>
<circle cx="551.0" cy="551.5" r="2.5" fill="#fff" stroke="#3ba272" stroke-width="1.6"/>
<circle cx="613.8" cy="551.5" r="2.5" fill="#fff" stroke="#3ba272" stroke-width="1.6"/>
<circle cx="676.6" cy="552.0" r="2.5" fill="#fff" stroke="#3ba272" stroke-width="1.6"/>
<circle cx="739.4" cy="551.5" r="2.5" fill="#fff" stroke="#3ba272" stroke-width="1.6"/>
<circle cx="802.2" cy="550.9" r="2.5" fill="#fff" stroke="#3ba272" stroke-width="1.6"/>
<circle cx="865.0" cy="551.5" r="2.5" fill="#fff" stroke="#3ba272" stroke-width="1.6"/>
<circle cx="927.8" cy="550.9" r="2.5" fill="#fff" stroke="#3ba272" stroke-width="1.6"/>
<circle cx="990.6" cy="551.5" r="3.6" fill="#fff" stroke="#3ba272" stroke-width="2.2"/>
<circle cx="1053.4" cy="550.9" r="2.5" fill="#fff" stroke="#3ba272" stroke-width="1.6"/>
<circle cx="1116.2" cy="550.9" r="2.5" fill="#fff" stroke="#3ba272" stroke-width="1.6"/>
<circle cx="1179.0" cy="551.5" r="2.5" fill="#fff" stroke="#3ba272" stroke-width="1.6"/>
<text x="237.0" y="386.4" font-size="12" fill="#333" text-anchor="middle" stroke="#fff" stroke-width="2" paint-order="stroke" stroke-linejoin="round">1728.93</text>
<text x="299.8" y="339.5" font-size="12" fill="#333" text-anchor="middle" stroke="#fff" stroke-width="2" paint-order="stroke" stroke-linejoin="round">2250.2</text>
<text x="362.6" y="275.4" font-size="12" fill="#333" text-anchor="middle" stroke="#fff" stroke-width="2" paint-order="stroke" stroke-linejoin="round">2962.27</text>
<text x="425.4" y="294.5" font-size="12" fill="#333" text-anchor="middle" stroke="#fff" stroke-width="2" paint-order="stroke" stroke-linejoin="round">2749.71</text>
<text x="488.2" y="400.3" font-size="12" fill="#333" text-anchor="middle" stroke="#fff" stroke-width="2" paint-order="stroke" stroke-linejoin="round">1574.82</text>
<text x="551.0" y="419.1" font-size="12" fill="#333" text-anchor="middle" stroke="#fff" stroke-width="2" paint-order="stroke" stroke-linejoin="round">1365.42</text>
<text x="613.8" y="417.5" font-size="12" fill="#333" text-anchor="middle" stroke="#fff" stroke-width="2" paint-order="stroke" stroke-linejoin="round">1383.77</text>
<text x="676.6" y="383.7" font-size="12" fill="#333" text-anchor="middle" stroke="#fff" stroke-width="2" paint-order="stroke" stroke-linejoin="round">1758.49</text>
<text x="739.4" y="359.0" font-size="12" fill="#333" text-anchor="middle" stroke="#fff" stroke-width="2" paint-order="stroke" stroke-linejoin="round">2033.53</text>
<text x="802.2" y="377.6" font-size="12" fill="#333" text-anchor="middle" stroke="#fff" stroke-width="2" paint-order="stroke" stroke-linejoin="round">1826.64</text>
<text x="865.0" y="389.9" font-size="12" fill="#333" text-anchor="middle" stroke="#fff" stroke-width="2" paint-order="stroke" stroke-linejoin="round">1690.05</text>
<text x="927.8" y="367.2" font-size="12" fill="#333" text-anchor="middle" stroke="#fff" stroke-width="2" paint-order="stroke" stroke-linejoin="round">1942.38</text>
<text x="990.6" y="390.9" font-size="12" fill="#333" text-anchor="middle" stroke="#fff" stroke-width="2" paint-order="stroke" stroke-linejoin="round">1678.82</text>
<text x="1053.4" y="396.6" font-size="12" fill="#333" text-anchor="middle" stroke="#fff" stroke-width="2" paint-order="stroke" stroke-linejoin="round">1615</text>
<text x="1116.2" y="378.5" font-size="12" fill="#333" text-anchor="middle" stroke="#fff" stroke-width="2" paint-order="stroke" stroke-linejoin="round">1817</text>
<text x="1179.0" y="533.3" font-size="12" fill="#333" text-anchor="middle" stroke="#fff" stroke-width="2" paint-order="stroke" stroke-linejoin="round">96.62</text>
<text x="237.0" y="532.9" font-size="12" fill="#333" text-anchor="middle" stroke="#fff" stroke-width="2" paint-order="stroke" stroke-linejoin="round">101.06</text>
<text x="299.8" y="531.9" font-size="12" fill="#333" text-anchor="middle" stroke="#fff" stroke-width="2" paint-order="stroke" stroke-linejoin="round">112.51</text>
<text x="362.6" y="532.7" font-size="12" fill="#333" text-anchor="middle" stroke="#fff" stroke-width="2" paint-order="stroke" stroke-linejoin="round">103.71</text>
<text x="425.4" y="534.7" font-size="12" fill="#333" text-anchor="middle" stroke="#fff" stroke-width="2" paint-order="stroke" stroke-linejoin="round">80.87</text>
<text x="488.2" y="536.5" font-size="12" fill="#333" text-anchor="middle" stroke="#fff" stroke-width="2" paint-order="stroke" stroke-linejoin="round">60.57</text>
<text x="551.0" y="532.5" font-size="12" fill="#333" text-anchor="middle" stroke="#fff" stroke-width="2" paint-order="stroke" stroke-linejoin="round">105.03</text>
<text x="613.8" y="536.1" font-size="12" fill="#333" text-anchor="middle" stroke="#fff" stroke-width="2" paint-order="stroke" stroke-linejoin="round">65.89</text>
<text x="676.6" y="532.0" font-size="12" fill="#333" text-anchor="middle" stroke="#fff" stroke-width="2" paint-order="stroke" stroke-linejoin="round">111.23</text>
<text x="739.4" y="533.7" font-size="12" fill="#333" text-anchor="middle" stroke="#fff" stroke-width="2" paint-order="stroke" stroke-linejoin="round">92.43</text>
<text x="802.2" y="532.9" font-size="12" fill="#333" text-anchor="middle" stroke="#fff" stroke-width="2" paint-order="stroke" stroke-linejoin="round">101.48</text>
<text x="865.0" y="533.5" font-size="12" fill="#333" text-anchor="middle" stroke="#fff" stroke-width="2" paint-order="stroke" stroke-linejoin="round">93.97</text>
<text x="927.8" y="532.9" font-size="12" fill="#333" text-anchor="middle" stroke="#fff" stroke-width="2" paint-order="stroke" stroke-linejoin="round">101.23</text>
<text x="990.6" y="529.4" font-size="12" fill="#333" text-anchor="middle" stroke="#fff" stroke-width="2" paint-order="stroke" stroke-linejoin="round">139.9</text>
<text x="1053.4" y="535.7" font-size="12" fill="#333" text-anchor="middle" stroke="#fff" stroke-width="2" paint-order="stroke" stroke-linejoin="round">70.18</text>
<text x="1116.2" y="536.4" font-size="12" fill="#333" text-anchor="middle" stroke="#fff" stroke-width="2" paint-order="stroke" stroke-linejoin="round">62.27</text>
<text x="1179.0" y="542.0" font-size="12" fill="#333" text-anchor="middle" stroke="#fff" stroke-width="2" paint-order="stroke" stroke-linejoin="round">0</text>
<text x="237.0" y="429.1" font-size="12" fill="#333" text-anchor="middle" stroke="#fff" stroke-width="2" paint-order="stroke" stroke-linejoin="round">209</text>
<text x="299.8" y="373.0" font-size="12" fill="#333" text-anchor="middle" stroke="#fff" stroke-width="2" paint-order="stroke" stroke-linejoin="round">313</text>
<text x="362.6" y="316.3" font-size="12" fill="#333" text-anchor="middle" stroke="#fff" stroke-width="2" paint-order="stroke" stroke-linejoin="round">418</text>
<text x="425.4" y="343.3" font-size="12" fill="#333" text-anchor="middle" stroke="#fff" stroke-width="2" paint-order="stroke" stroke-linejoin="round">368</text>
<text x="488.2" y="386.5" font-size="12" fill="#333" text-anchor="middle" stroke="#fff" stroke-width="2" paint-order="stroke" stroke-linejoin="round">288</text>
<text x="551.0" y="401.6" font-size="12" fill="#333" text-anchor="middle" stroke="#fff" stroke-width="2" paint-order="stroke" stroke-linejoin="round">260</text>
<text x="613.8" y="398.9" font-size="12" fill="#333" text-anchor="middle" stroke="#fff" stroke-width="2" paint-order="stroke" stroke-linejoin="round">265</text>
<text x="676.6" y="375.1" font-size="12" fill="#333" text-anchor="middle" stroke="#fff" stroke-width="2" paint-order="stroke" stroke-linejoin="round">309</text>
<text x="739.4" y="371.4" font-size="12" fill="#333" text-anchor="middle" stroke="#fff" stroke-width="2" paint-order="stroke" stroke-linejoin="round">316</text>
<text x="802.2" y="381.1" font-size="12" fill="#333" text-anchor="middle" stroke="#fff" stroke-width="2" paint-order="stroke" stroke-linejoin="round">298</text>
<text x="865.0" y="390.8" font-size="12" fill="#333" text-anchor="middle" stroke="#fff" stroke-width="2" paint-order="stroke" stroke-linejoin="round">280</text>
<text x="927.8" y="390.8" font-size="12" fill="#333" text-anchor="middle" stroke="#fff" stroke-width="2" paint-order="stroke" stroke-linejoin="round">280</text>
<text x="990.6" y="392.4" font-size="12" fill="#333" text-anchor="middle" stroke="#fff" stroke-width="2" paint-order="stroke" stroke-linejoin="round">277</text>
<text x="1053.4" y="381.1" font-size="12" fill="#333" text-anchor="middle" stroke="#fff" stroke-width="2" paint-order="stroke" stroke-linejoin="round">298</text>
<text x="1116.2" y="344.4" font-size="12" fill="#333" text-anchor="middle" stroke="#fff" stroke-width="2" paint-order="stroke" stroke-linejoin="round">366</text>
<text x="1179.0" y="536.6" font-size="12" fill="#333" text-anchor="middle" stroke="#fff" stroke-width="2" paint-order="stroke" stroke-linejoin="round">10</text>
<text x="237.0" y="533.4" font-size="12" fill="#333" text-anchor="middle" stroke="#fff" stroke-width="2" paint-order="stroke" stroke-linejoin="round">16</text>
<text x="299.8" y="531.2" font-size="12" fill="#333" text-anchor="middle" stroke="#fff" stroke-width="2" paint-order="stroke" stroke-linejoin="round">20</text>
<text x="362.6" y="527.4" font-size="12" fill="#333" text-anchor="middle" stroke="#fff" stroke-width="2" paint-order="stroke" stroke-linejoin="round">27</text>
<text x="425.4" y="523.6" font-size="12" fill="#333" text-anchor="middle" stroke="#fff" stroke-width="2" paint-order="stroke" stroke-linejoin="round">34</text>
<text x="488.2" y="528.0" font-size="12" fill="#333" text-anchor="middle" stroke="#fff" stroke-width="2" paint-order="stroke" stroke-linejoin="round">26</text>
<text x="551.0" y="535.0" font-size="12" fill="#333" text-anchor="middle" stroke="#fff" stroke-width="2" paint-order="stroke" stroke-linejoin="round">13</text>
<text x="613.8" y="530.7" font-size="12" fill="#333" text-anchor="middle" stroke="#fff" stroke-width="2" paint-order="stroke" stroke-linejoin="round">21</text>
<text x="676.6" y="533.9" font-size="12" fill="#333" text-anchor="middle" stroke="#fff" stroke-width="2" paint-order="stroke" stroke-linejoin="round">15</text>
<text x="739.4" y="530.1" font-size="12" fill="#333" text-anchor="middle" stroke="#fff" stroke-width="2" paint-order="stroke" stroke-linejoin="round">22</text>
<text x="802.2" y="532.3" font-size="12" fill="#333" text-anchor="middle" stroke="#fff" stroke-width="2" paint-order="stroke" stroke-linejoin="round">18</text>
<text x="865.0" y="532.3" font-size="12" fill="#333" text-anchor="middle" stroke="#fff" stroke-width="2" paint-order="stroke" stroke-linejoin="round">18</text>
<text x="927.8" y="531.7" font-size="12" fill="#333" text-anchor="middle" stroke="#fff" stroke-width="2" paint-order="stroke" stroke-linejoin="round">19</text>
<text x="990.6" y="535.5" font-size="12" fill="#333" text-anchor="middle" stroke="#fff" stroke-width="2" paint-order="stroke" stroke-linejoin="round">12</text>
<text x="1053.4" y="529.6" font-size="12" fill="#333" text-anchor="middle" stroke="#fff" stroke-width="2" paint-order="stroke" stroke-linejoin="round">23</text>
<text x="1116.2" y="526.9" font-size="12" fill="#333" text-anchor="middle" stroke="#fff" stroke-width="2" paint-order="stroke" stroke-linejoin="round">28</text>
<text x="1179.0" y="542.0" font-size="12" fill="#333" text-anchor="middle" stroke="#fff" stroke-width="2" paint-order="stroke" stroke-linejoin="round">0</text>
<text x="237.0" y="542.0" font-size="12" fill="#333" text-anchor="middle" stroke="#fff" stroke-width="2" paint-order="stroke" stroke-linejoin="round">0</text>
<text x="299.8" y="542.0" font-size="12" fill="#333" text-anchor="middle" stroke="#fff" stroke-width="2" paint-order="stroke" stroke-linejoin="round">0</text>
<text x="362.6" y="542.0" font-size="12" fill="#333" text-anchor="middle" stroke="#fff" stroke-width="2" paint-order="stroke" stroke-linejoin="round">0</text>
<text x="425.4" y="542.0" font-size="12" fill="#333" text-anchor="middle" stroke="#fff" stroke-width="2" paint-order="stroke" stroke-linejoin="round">0</text>
<text x="488.2" y="541.5" font-size="12" fill="#333" text-anchor="middle" stroke="#fff" stroke-width="2" paint-order="stroke" stroke-linejoin="round">1</text>
<text x="551.0" y="541.5" font-size="12" fill="#333" text-anchor="middle" stroke="#fff" stroke-width="2" paint-order="stroke" stroke-linejoin="round">1</text>
<text x="613.8" y="541.5" font-size="12" fill="#333" text-anchor="middle" stroke="#fff" stroke-width="2" paint-order="stroke" stroke-linejoin="round">1</text>
<text x="676.6" y="542.0" font-size="12" fill="#333" text-anchor="middle" stroke="#fff" stroke-width="2" paint-order="stroke" stroke-linejoin="round">0</text>
<text x="739.4" y="541.5" font-size="12" fill="#333" text-anchor="middle" stroke="#fff" stroke-width="2" paint-order="stroke" stroke-linejoin="round">1</text>
<text x="802.2" y="540.9" font-size="12" fill="#333" text-anchor="middle" stroke="#fff" stroke-width="2" paint-order="stroke" stroke-linejoin="round">2</text>
<text x="865.0" y="541.5" font-size="12" fill="#333" text-anchor="middle" stroke="#fff" stroke-width="2" paint-order="stroke" stroke-linejoin="round">1</text>
<text x="927.8" y="540.9" font-size="12" fill="#333" text-anchor="middle" stroke="#fff" stroke-width="2" paint-order="stroke" stroke-linejoin="round">2</text>
<text x="990.6" y="541.5" font-size="12" fill="#333" text-anchor="middle" stroke="#fff" stroke-width="2" paint-order="stroke" stroke-linejoin="round">1</text>
<text x="1053.4" y="540.9" font-size="12" fill="#333" text-anchor="middle" stroke="#fff" stroke-width="2" paint-order="stroke" stroke-linejoin="round">2</text>
<text x="1116.2" y="540.9" font-size="12" fill="#333" text-anchor="middle" stroke="#fff" stroke-width="2" paint-order="stroke" stroke-linejoin="round">2</text>
<text x="1179.0" y="541.5" font-size="12" fill="#333" text-anchor="middle" stroke="#fff" stroke-width="2" paint-order="stroke" stroke-linejoin="round">1</text>
<text x="237.0" y="542.0" font-size="12" fill="#333" text-anchor="middle" stroke="#fff" stroke-width="2" paint-order="stroke" stroke-linejoin="round">0</text>
<text x="299.8" y="542.0" font-size="12" fill="#333" text-anchor="middle" stroke="#fff" stroke-width="2" paint-order="stroke" stroke-linejoin="round">0</text>
<text x="362.6" y="542.0" font-size="12" fill="#333" text-anchor="middle" stroke="#fff" stroke-width="2" paint-order="stroke" stroke-linejoin="round">0</text>
<text x="425.4" y="542.0" font-size="12" fill="#333" text-anchor="middle" stroke="#fff" stroke-width="2" paint-order="stroke" stroke-linejoin="round">0</text>
<text x="488.2" y="541.5" font-size="12" fill="#333" text-anchor="middle" stroke="#fff" stroke-width="2" paint-order="stroke" stroke-linejoin="round">1</text>
<text x="551.0" y="541.5" font-size="12" fill="#333" text-anchor="middle" stroke="#fff" stroke-width="2" paint-order="stroke" stroke-linejoin="round">1</text>
<text x="613.8" y="541.5" font-size="12" fill="#333" text-anchor="middle" stroke="#fff" stroke-width="2" paint-order="stroke" stroke-linejoin="round">1</text>
<text x="676.6" y="542.0" font-size="12" fill="#333" text-anchor="middle" stroke="#fff" stroke-width="2" paint-order="stroke" stroke-linejoin="round">0</text>
<text x="739.4" y="541.5" font-size="12" fill="#333" text-anchor="middle" stroke="#fff" stroke-width="2" paint-order="stroke" stroke-linejoin="round">1</text>
<text x="802.2" y="540.9" font-size="12" fill="#333" text-anchor="middle" stroke="#fff" stroke-width="2" paint-order="stroke" stroke-linejoin="round">2</text>
<text x="865.0" y="541.5" font-size="12" fill="#333" text-anchor="middle" stroke="#fff" stroke-width="2" paint-order="stroke" stroke-linejoin="round">1</text>
<text x="927.8" y="540.9" font-size="12" fill="#333" text-anchor="middle" stroke="#fff" stroke-width="2" paint-order="stroke" stroke-linejoin="round">2</text>
<text x="990.6" y="541.5" font-size="12" fill="#333" text-anchor="middle" stroke="#fff" stroke-width="2" paint-order="stroke" stroke-linejoin="round">1</text>
<text x="1053.4" y="540.9" font-size="12" fill="#333" text-anchor="middle" stroke="#fff" stroke-width="2" paint-order="stroke" stroke-linejoin="round">2</text>
<text x="1116.2" y="540.9" font-size="12" fill="#333" text-anchor="middle" stroke="#fff" stroke-width="2" paint-order="stroke" stroke-linejoin="round">2</text>
<text x="1179.0" y="541.5" font-size="12" fill="#333" text-anchor="middle" stroke="#fff" stroke-width="2" paint-order="stroke" stroke-linejoin="round">1</text>
<line x1="490" y1="233" x2="515" y2="233" stroke="#5470c6" stroke-width="2"/>
<circle cx="502.5" cy="233" r="5.5" fill="#fff" stroke="#5470c6" stroke-width="2"/>
<text x="520" y="237.5" font-size="12" fill="#333" textLength="24" lengthAdjust="spacing">消费</text>
<line x1="555" y1="233" x2="580" y2="233" stroke="#91cc75" stroke-width="2"/>
<circle cx="567.5" cy="233" r="5.5" fill="#fff" stroke="#91cc75" stroke-width="2"/>
<text x="585" y="237.5" font-size="12" fill="#333" textLength="48" lengthAdjust="spacing">咨询成本</text>
<line x1="643" y1="233" x2="668" y2="233" stroke="#fac858" stroke-width="2"/>
<circle cx="655.5" cy="233" r="5.5" fill="#fff" stroke="#fac858" stroke-width="2"/>
<text x="673" y="237.5" font-size="12" fill="#333" textLength="24" lengthAdjust="spacing">点击</text>
<line x1="707" y1="233" x2="732" y2="233" stroke="#ee6666" stroke-width="2"/>
<circle cx="719.5" cy="233" r="5.5" fill="#fff" stroke="#ee6666" stroke-width="2"/>
<text x="737" y="237.5" font-size="12" fill="#333" textLength="36" lengthAdjust="spacing">咨询量</text>
<line x1="783" y1="233" x2="808" y2="233" stroke="#73c0de" stroke-width="2"/>
<circle cx="795.5" cy="233" r="5.5" fill="#fff" stroke="#73c0de" stroke-width="2"/>
<text x="813" y="237.5" font-size="12" fill="#333" textLength="36" lengthAdjust="spacing">预约量</text>
<line x1="859" y1="233" x2="884" y2="233" stroke="#3ba272" stroke-width="2"/>
<circle cx="871.5" cy="233" r="5.5" fill="#fff" stroke="#3ba272" stroke-width="2"/>
<text x="889" y="237.5" font-size="12" fill="#333" textLength="36" lengthAdjust="spacing">到校量</text>
<path d="M1260 235.6h2.4l3-7 1.8 11.4 2.6-6 1.3 3.6h3.6M1260 244h15" fill="none" stroke="#666" stroke-width="1.1"/>
<path d="M1288.6 234.2h3v7h-3zM1293.8 231.8h3v9.4h-3zM1298.6 228.6h3v12.6h-3zM1288 244h14" fill="none" stroke="#666" stroke-width="1.1"/>
<path d="M1322 229v12M1315.8 234.6l6.2 6.2 6.2-6.2M1315.5 240v4.3h13v-4.3" fill="none" stroke="#666" stroke-width="1.1"/>
<rect x="1007.5" y="276.5" width="141" height="177" rx="4" fill="#fff" stroke="#fff" style="filter:drop-shadow(1px 2px 5px rgba(0,0,0,0.18))"/>
<text x="1018" y="297" font-size="14" fill="#666">20:00</text>
<circle cx="1023" cy="316" r="5" fill="#5470c6"/>
<text x="1034" y="320" font-size="12" fill="#666" textLength="24" lengthAdjust="spacing">消费</text>
<text x="1137" y="321" font-size="14" fill="#464646" font-weight="bold" text-anchor="end">1,678.82</text>
<circle cx="1023" cy="340" r="5" fill="#91cc75"/>
<text x="1034" y="344" font-size="12" fill="#666" textLength="48" lengthAdjust="spacing">咨询成本</text>
<text x="1137" y="345" font-size="14" fill="#464646" font-weight="bold" text-anchor="end">139.9</text>
<circle cx="1023" cy="364" r="5" fill="#fac858"/>
<text x="1034" y="368" font-size="12" fill="#666" textLength="24" lengthAdjust="spacing">点击</text>
<text x="1137" y="369" font-size="14" fill="#464646" font-weight="bold" text-anchor="end">277</text>
<circle cx="1023" cy="388" r="5" fill="#ee6666"/>
<text x="1034" y="392" font-size="12" fill="#666" textLength="36" lengthAdjust="spacing">咨询量</text>
<text x="1137" y="393" font-size="14" fill="#464646" font-weight="bold" text-anchor="end">12</text>
<circle cx="1023" cy="412" r="5" fill="#73c0de"/>
<text x="1034" y="416" font-size="12" fill="#666" textLength="36" lengthAdjust="spacing">预约量</text>
<text x="1137" y="417" font-size="14" fill="#464646" font-weight="bold" text-anchor="end">1</text>
<circle cx="1023" cy="436" r="5" fill="#3ba272"/>
<text x="1034" y="440" font-size="12" fill="#666" textLength="36" lengthAdjust="spacing">到校量</text>
<text x="1137" y="441" font-size="14" fill="#464646" font-weight="bold" text-anchor="end">1</text>
</svg>
<div class="a" style="left:70px;top:627px;width:1276px;height:49px;background:#faf7e4;border:1px solid #f9e9c9;border-radius:4px"></div>
<div class="t" style="left:87px;top:646.0px;font-size:12px;color:#8a6d3b;font-weight:normal;"><i>说</i><i>明</i><i>：</i>[<i>到</i><i>校</i><i>量</i>]<i>统</i><i>计</i><i>方</i><i>法</i><i>为</i><i>该</i><i>时</i><i>间</i><i>段</i><i>内</i><i>所</i><i>有</i><i>咨</i><i>询</i><i>人</i><i>数</i><i>，</i><i>其</i><i>中</i><i>有</i><i>到</i><i>校</i><i>的</i><i>人</i><i>数</i><i>；</i><i>请</i><i>注</i><i>意</i><i>区</i><i>别</i><i>与</i><i>数</i><i>据</i><i>汇</i><i>总</i><i>报</i><i>表</i><i>中</i><i>到</i><i>校</i><i>人</i><i>数</i><i>算</i><i>法</i><i>的</i><i>不</i><i>同</i><i>；</i></div>
<svg class="a" style="left:1318px;top:648px;" width="12" height="12" viewBox="0 0 12 12"><path d="M1 1l10 10M11 1 1 11" stroke="#d5c9ad" stroke-width="2"/></svg>
<div class="a" style="left:75px;top:697px;width:1266px;height:203px;background:#fff;border-top:3px solid #e7eaec"></div>
<div class="a" style="left:75px;top:736px;width:1266px;height:1px;background:#e7eaec"></div>
<div class="t" style="left:81px;top:711.5px;font-size:14px;color:#337ab7;font-weight:bold;"><i>时</i><i>间</i><i>段</i><i>报</i><i>表</i></div>
<svg class="a" style="left:1323px;top:712.5px;" width="14" height="9" viewBox="0 0 14 9"><path d="M1.5 7.5 7 2l5.5 5.5" fill="none" stroke="#c8c8c8" stroke-width="2.6"/></svg>
<div class="a" style="left:80px;top:781px;width:1256px;height:1px;background:#e7eaec"></div>
<div class="a" style="left:80px;top:743px;width:71px;height:39px;background:#fff;border:1px solid #e7eaec;border-bottom:none;border-radius:4px 4px 0 0"></div>
<div class="t" style="left:82px;width:72px;text-align:center;top:755.5px;font-size:13px;color:#555;font-weight:bold;"><i>列</i><i>表</i></div>
<div class="t" style="left:160px;width:62px;text-align:center;top:755.5px;font-size:13px;color:#a7b1c2;font-weight:bold;"><i>说</i><i>明</i></div>
<div class="t" style="left:80px;top:800.0px;font-size:12px;color:#333;font-weight:normal;"><i>显</i><i>示</i><i>条</i><i>数</i>:</div>
<div class="a" style="left:141px;top:792px;width:43px;height:30px;background:#fff;border:1px solid #e5e6e7;border-radius:4px"></div>
<div class="t" style="left:150px;top:800.5px;font-size:13px;color:#333;font-weight:normal;">25</div>
<svg class="a" style="left:173px;top:801px;" width="7" height="11" viewBox="0 0 7 11"><path d="M3.5 0.5 6.5 4.5h-6zM3.5 10.5 6.5 6.5h-6z" fill="#222"/></svg>
<div class="t" style="left:1147px;top:800.0px;font-size:12px;color:#333;font-weight:normal;"><i>搜</i><i>索</i>:</div>
<div class="a" style="left:1183px;top:792px;width:153px;height:30px;background:#fff;border:1px solid #e5e6e7"></div>
<div class="a" style="left:80px;top:833px;width:1256px;height:40px;background:#fff;border:1px solid #e7e7e7"></div>
<div class="a" style="left:80px;top:863px;width:1256px;height:2px;background:#e7e7e7"></div>
<div class="t" style="left:86px;top:842.5px;font-size:12px;color:#333;font-weight:bold;"><i>时</i><i>间</i><i>段</i></div>
<svg class="a" style="left:175.5px;top:842px;" width="8" height="13" viewBox="0 0 8 13"><path d="M4 0.5 7.8 5.2H.2zM4 12.5 7.8 7.8H.2z" fill="#b4b4b4"/></svg>
<div class="a" style="left:194px;top:833px;width:1px;height:40px;background:#e7e7e7"></div>
<div class="t" style="left:200px;top:842.5px;font-size:12px;color:#333;font-weight:bold;"><i>消</i><i>费</i><i>合</i><i>计</i></div>
<svg class="a" style="left:315.5px;top:842px;" width="8" height="13" viewBox="0 0 8 13"><path d="M4 0.5 7.8 5.2H.2zM4 12.5 7.8 7.8H.2z" fill="#b4b4b4"/></svg>
<div class="a" style="left:334px;top:833px;width:1px;height:40px;background:#e7e7e7"></div>
<div class="t" style="left:340px;top:842.5px;font-size:12px;color:#333;font-weight:bold;"><i>展</i><i>现</i><i>合</i><i>计</i></div>
<svg class="a" style="left:455.5px;top:842px;" width="8" height="13" viewBox="0 0 8 13"><path d="M4 0.5 7.8 5.2H.2zM4 12.5 7.8 7.8H.2z" fill="#b4b4b4"/></svg>
<div class="a" style="left:474px;top:833px;width:1px;height:40px;background:#e7e7e7"></div>
<div class="t" style="left:480px;top:842.5px;font-size:12px;color:#333;font-weight:bold;"><i>点</i><i>击</i><i>合</i><i>计</i></div>
<svg class="a" style="left:594.5px;top:842px;" width="8" height="13" viewBox="0 0 8 13"><path d="M4 0.5 7.8 5.2H.2zM4 12.5 7.8 7.8H.2z" fill="#b4b4b4"/></svg>
<div class="a" style="left:613px;top:833px;width:1px;height:40px;background:#e7e7e7"></div>
<div class="t" style="left:619px;top:842.5px;font-size:12px;color:#333;font-weight:bold;"><i>咨</i><i>询</i><i>量</i></div>
<svg class="a" style="left:710.5px;top:842px;" width="8" height="13" viewBox="0 0 8 13"><path d="M4 0.5 7.8 5.2H.2zM4 12.5 7.8 7.8H.2z" fill="#b4b4b4"/></svg>
<div class="a" style="left:729px;top:833px;width:1px;height:40px;background:#e7e7e7"></div>
<div class="t" style="left:735px;top:842.5px;font-size:12px;color:#333;font-weight:bold;"><i>预</i><i>约</i><i>量</i></div>
<svg class="a" style="left:826.5px;top:842px;" width="8" height="13" viewBox="0 0 8 13"><path d="M4 0.5 7.8 5.2H.2zM4 12.5 7.8 7.8H.2z" fill="#b4b4b4"/></svg>
<div class="a" style="left:845px;top:833px;width:1px;height:40px;background:#e7e7e7"></div>
<div class="t" style="left:851px;top:842.5px;font-size:12px;color:#333;font-weight:bold;"><i>到</i><i>校</i><i>量</i></div>
<svg class="a" style="left:942.5px;top:842px;" width="8" height="13" viewBox="0 0 8 13"><path d="M4 0.5 7.8 5.2H.2zM4 12.5 7.8 7.8H.2z" fill="#b4b4b4"/></svg>
<div class="a" style="left:961px;top:833px;width:1px;height:40px;background:#e7e7e7"></div>
<div class="t" style="left:967px;top:842.5px;font-size:12px;color:#333;font-weight:bold;"><i>咨</i><i>询</i><i>成</i><i>本</i></div>
<svg class="a" style="left:1083.5px;top:842px;" width="8" height="13" viewBox="0 0 8 13"><path d="M4 0.5 7.8 5.2H.2zM4 12.5 7.8 7.8H.2z" fill="#b4b4b4"/></svg>
<div class="a" style="left:1102px;top:833px;width:1px;height:40px;background:#e7e7e7"></div>
<div class="t" style="left:1108px;top:842.5px;font-size:12px;color:#333;font-weight:bold;"><i>咨</i><i>询</i><i>率</i></div>
<svg class="a" style="left:1199.5px;top:842px;" width="8" height="13" viewBox="0 0 8 13"><path d="M4 0.5 7.8 5.2H.2zM4 12.5 7.8 7.8H.2z" fill="#b4b4b4"/></svg>
<div class="a" style="left:1218px;top:833px;width:1px;height:40px;background:#e7e7e7"></div>
<div class="t" style="left:1224px;top:842.5px;font-size:12px;color:#333;font-weight:bold;"><i>点</i><i>击</i><i>率</i></div>
<svg class="a" style="left:1317.5px;top:842px;" width="8" height="13" viewBox="0 0 8 13"><path d="M4 0.5 7.8 5.2H.2zM4 12.5 7.8 7.8H.2z" fill="#b4b4b4"/></svg>
</body></html>
